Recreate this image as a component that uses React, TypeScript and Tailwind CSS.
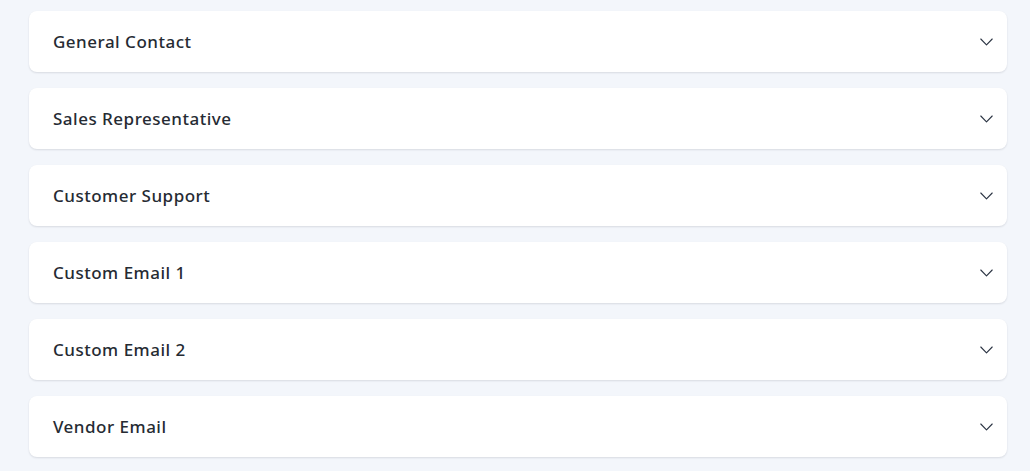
import React from "react";

const items = [
  "General Contact",
  "Sales Representative",
  "Customer Support",
  "Custom Email 1",
  "Custom Email 2",
  "Vendor Email",
];

function Chevron() {
  return (
    <svg width="13" height="8" viewBox="0 0 13 8" fill="none" className="text-[#2a3342]">
      <path d="M0.8 1l5.7 5.8 5.7-5.8" stroke="currentColor" strokeWidth="1.1" strokeLinecap="round" strokeLinejoin="round" />
    </svg>
  );
}

export default function App() {
  return (
    <div className="min-h-[471px] bg-[#f3f6fb] pt-[11px] pl-[29px] pr-[23px] pb-[14px]" style={{ fontFamily: '"Noto Sans", "Open Sans", sans-serif' }}>
      <div className="flex flex-col gap-[16px]">
        {items.map((t) => (
          <div
            key={t}
            className="h-[61px] bg-white rounded-[8px] shadow-[0_1px_2px_rgba(15,23,42,0.12)] flex items-center justify-between pl-[24px] pr-[14px]"
          >
            <span className="text-[17px] font-medium text-[#262b33] tracking-[0.5px]">{t}</span>
            <Chevron />
          </div>
        ))}
      </div>
    </div>
  );
}
